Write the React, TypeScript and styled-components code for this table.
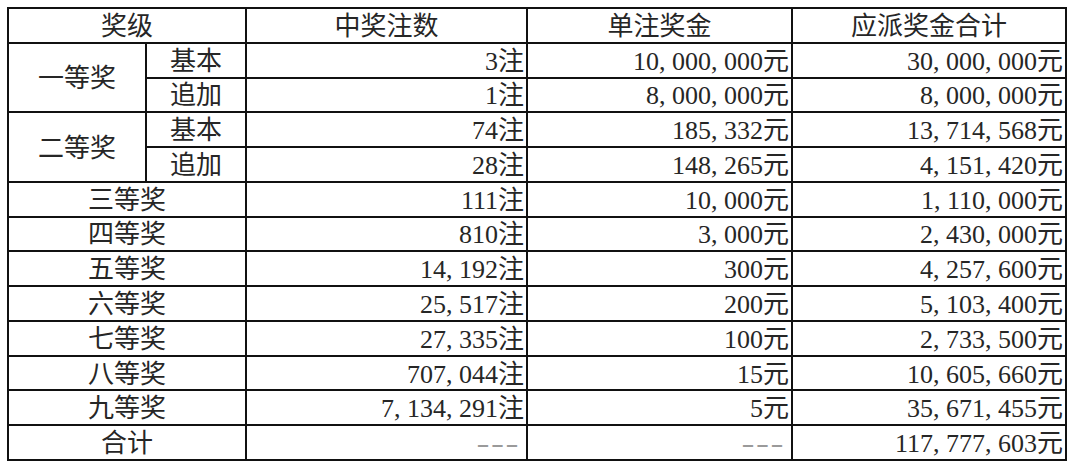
import styled, { createGlobalStyle } from 'styled-components';

const GlobalStyle = createGlobalStyle`
    html, body {
        margin: 0;
        padding: 0;
        background: #fff;
    }
`

interface IRow {
    level: string
    sub?: string
    span?: number
    count: string
    unit: string
    total: string
}

const rows: IRow[] = [
    { level: '一等奖', sub: '基本', span: 2, count: '3注', unit: '10,000,000元', total: '30,000,000元' },
    { level: '', sub: '追加', count: '1注', unit: '8,000,000元', total: '8,000,000元' },
    { level: '二等奖', sub: '基本', span: 2, count: '74注', unit: '185,332元', total: '13,714,568元' },
    { level: '', sub: '追加', count: '28注', unit: '148,265元', total: '4,151,420元' },
    { level: '三等奖', count: '111注', unit: '10,000元', total: '1,110,000元' },
    { level: '四等奖', count: '810注', unit: '3,000元', total: '2,430,000元' },
    { level: '五等奖', count: '14,192注', unit: '300元', total: '4,257,600元' },
    { level: '六等奖', count: '25,517注', unit: '200元', total: '5,103,400元' },
    { level: '七等奖', count: '27,335注', unit: '100元', total: '2,733,500元' },
    { level: '八等奖', count: '707,044注', unit: '15元', total: '10,605,660元' },
    { level: '九等奖', count: '7,134,291注', unit: '5元', total: '35,671,455元' },
    { level: '合计', count: '---', unit: '---', total: '117,777,603元' },
]

// commas are drawn as wide as a digit, like the half-width glyphs of the source font
const Amount = ({ value }: { value: string }) => {
    if (value === '---') return <Dashes>{value}</Dashes>
    const parts = value.split(',')
    return (
        <>
            {parts.map((p, i) => (
                <span key={i}>
                    {p}
                    {i < parts.length - 1 && <Comma>,</Comma>}
                </span>
            ))}
        </>
    )
}

const App = () => {
    return (
        <>
            <GlobalStyle />
            <Page>
                <Table>
                    <colgroup>
                        <col style={{ width: 138 }} />
                        <col style={{ width: 100 }} />
                        <col style={{ width: 281 }} />
                        <col style={{ width: 265 }} />
                        <col style={{ width: 274 }} />
                    </colgroup>
                    <thead>
                        <Row>
                            <Cell as="th" colSpan={2}>奖级</Cell>
                            <Cell as="th">中奖注数</Cell>
                            <Cell as="th">单注奖金</Cell>
                            <Cell as="th">应派奖金合计</Cell>
                        </Row>
                    </thead>
                    <tbody>
                        {rows.map((r, i) => (
                            <Row key={i}>
                                {r.sub ? (
                                    <>
                                        {r.span && <Cell rowSpan={r.span}>{r.level}</Cell>}
                                        <Cell>{r.sub}</Cell>
                                    </>
                                ) : (
                                    <Cell colSpan={2}>{r.level}</Cell>
                                )}
                                <Cell $right><Amount value={r.count} /></Cell>
                                <Cell $right><Amount value={r.unit} /></Cell>
                                <Cell $right><Amount value={r.total} /></Cell>
                            </Row>
                        ))}
                    </tbody>
                </Table>
            </Page>
        </>
    )
}

const Page = styled.div`
    padding: 7px 0 0 7px;
`
const Table = styled.table`
    border-collapse: collapse;
    table-layout: fixed;
    width: 1058px;
    font-family: "Liberation Serif", "Noto Sans CJK SC", serif;
    font-size: 26px;
    color: #262626;
`
const Row = styled.tr`
    height: 34.77px;
`
const Cell = styled.td<{ $right?: boolean }>`
    border: 2px solid #111;
    padding: 3px ${p => (p.$right ? '2px' : '4px')} 0 4px;
    font-weight: normal;
    line-height: 28px;
    text-align: ${p => (p.$right ? 'right' : 'center')};
    white-space: nowrap;
`
const Comma = styled.span`
    display: inline-block;
    width: 0.5em;
    text-align: left;
`
const Dashes = styled.span`
    display: inline-block;
    color: #9a9a9a;
    letter-spacing: 1px;
    transform: scaleX(1.5);
    transform-origin: right center;
    margin-right: 4px;
`

export default App
